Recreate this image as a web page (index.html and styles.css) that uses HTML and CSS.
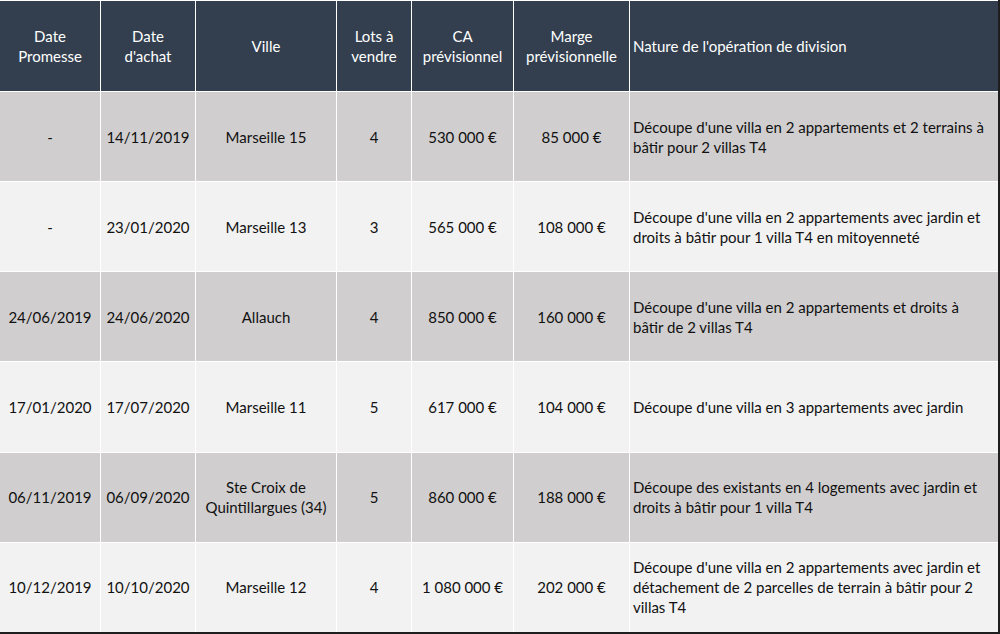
FILE: index.html
```html
<!DOCTYPE html>
<html lang="fr">
<head>
<meta charset="utf-8">
<link rel="stylesheet" href="styles.css">
</head>
<body>
<div class="sheet">
  <div class="cell head">Date<br>Promesse</div>
  <div class="cell head">Date<br>d'achat</div>
  <div class="cell head">Ville</div>
  <div class="cell head">Lots à<br>vendre</div>
  <div class="cell head">CA<br>prévisionnel</div>
  <div class="cell head">Marge<br>prévisionnelle</div>
  <div class="cell head left">Nature de l'opération de division</div>

  <div class="cell dark">-</div>
  <div class="cell dark">14/11/2019</div>
  <div class="cell dark">Marseille 15</div>
  <div class="cell dark">4</div>
  <div class="cell dark">530 000 €</div>
  <div class="cell dark">85 000 €</div>
  <div class="cell dark left">Découpe d'une villa en 2 appartements et 2 terrains à bâtir pour 2 villas T4</div>

  <div class="cell light">-</div>
  <div class="cell light">23/01/2020</div>
  <div class="cell light">Marseille 13</div>
  <div class="cell light">3</div>
  <div class="cell light">565 000 €</div>
  <div class="cell light">108 000 €</div>
  <div class="cell light left">Découpe d'une villa en 2 appartements avec jardin et droits à bâtir pour 1 villa T4 en mitoyenneté</div>

  <div class="cell dark">24/06/2019</div>
  <div class="cell dark">24/06/2020</div>
  <div class="cell dark">Allauch</div>
  <div class="cell dark">4</div>
  <div class="cell dark">850 000 €</div>
  <div class="cell dark">160 000 €</div>
  <div class="cell dark left">Découpe d'une villa en 2 appartements et droits à bâtir de 2 villas T4</div>

  <div class="cell light">17/01/2020</div>
  <div class="cell light">17/07/2020</div>
  <div class="cell light">Marseille 11</div>
  <div class="cell light">5</div>
  <div class="cell light">617 000 €</div>
  <div class="cell light">104 000 €</div>
  <div class="cell light left">Découpe d'une villa en 3 appartements avec jardin</div>

  <div class="cell dark">06/11/2019</div>
  <div class="cell dark">06/09/2020</div>
  <div class="cell dark">Ste Croix de<br>Quintillargues (34)</div>
  <div class="cell dark">5</div>
  <div class="cell dark">860 000 €</div>
  <div class="cell dark">188 000 €</div>
  <div class="cell dark left">Découpe des existants en 4 logements avec jardin et droits à bâtir pour 1 villa T4</div>

  <div class="cell light">10/12/2019</div>
  <div class="cell light">10/10/2020</div>
  <div class="cell light">Marseille 12</div>
  <div class="cell light">4</div>
  <div class="cell light">1 080 000 €</div>
  <div class="cell light">202 000 €</div>
  <div class="cell light left">Découpe d'une villa en 2 appartements avec jardin et détachement de 2 parcelles de terrain à bâtir pour 2 villas T4</div>
</div>
</body>
</html>
```
FILE: styles.css
```css
html, body {
  margin: 0;
  padding: 0;
  background: #ffffff;
}
.sheet {
  box-sizing: border-box;
  width: 1000px;
  height: 634px;
  padding-top: 1px;
  border-right: 2px solid #1e1e1e;
  border-bottom: 2px solid #1e1e1e;
  display: grid;
  grid-template-columns: 100px 94px 140px 74px 101px 115px 1fr;
  grid-template-rows: 90px repeat(6, 1fr);
  gap: 1px;
  background: #ffffff;
  font-family: Lato, "Open Sans", sans-serif;
  font-size: 15px;
  line-height: 20px;
  color: #111111;
}
.cell {
  display: flex;
  align-items: center;
  justify-content: center;
  text-align: center;
  padding: 0 3px;
}
.cell.left {
  justify-content: flex-start;
  text-align: left;
  padding-left: 3px;
  padding-right: 6px;
}
.head {
  background: #333f4f;
  color: #ffffff;
}
.dark {
  background: #d0cece;
}
.light {
  background: #f2f2f2;
}
```
